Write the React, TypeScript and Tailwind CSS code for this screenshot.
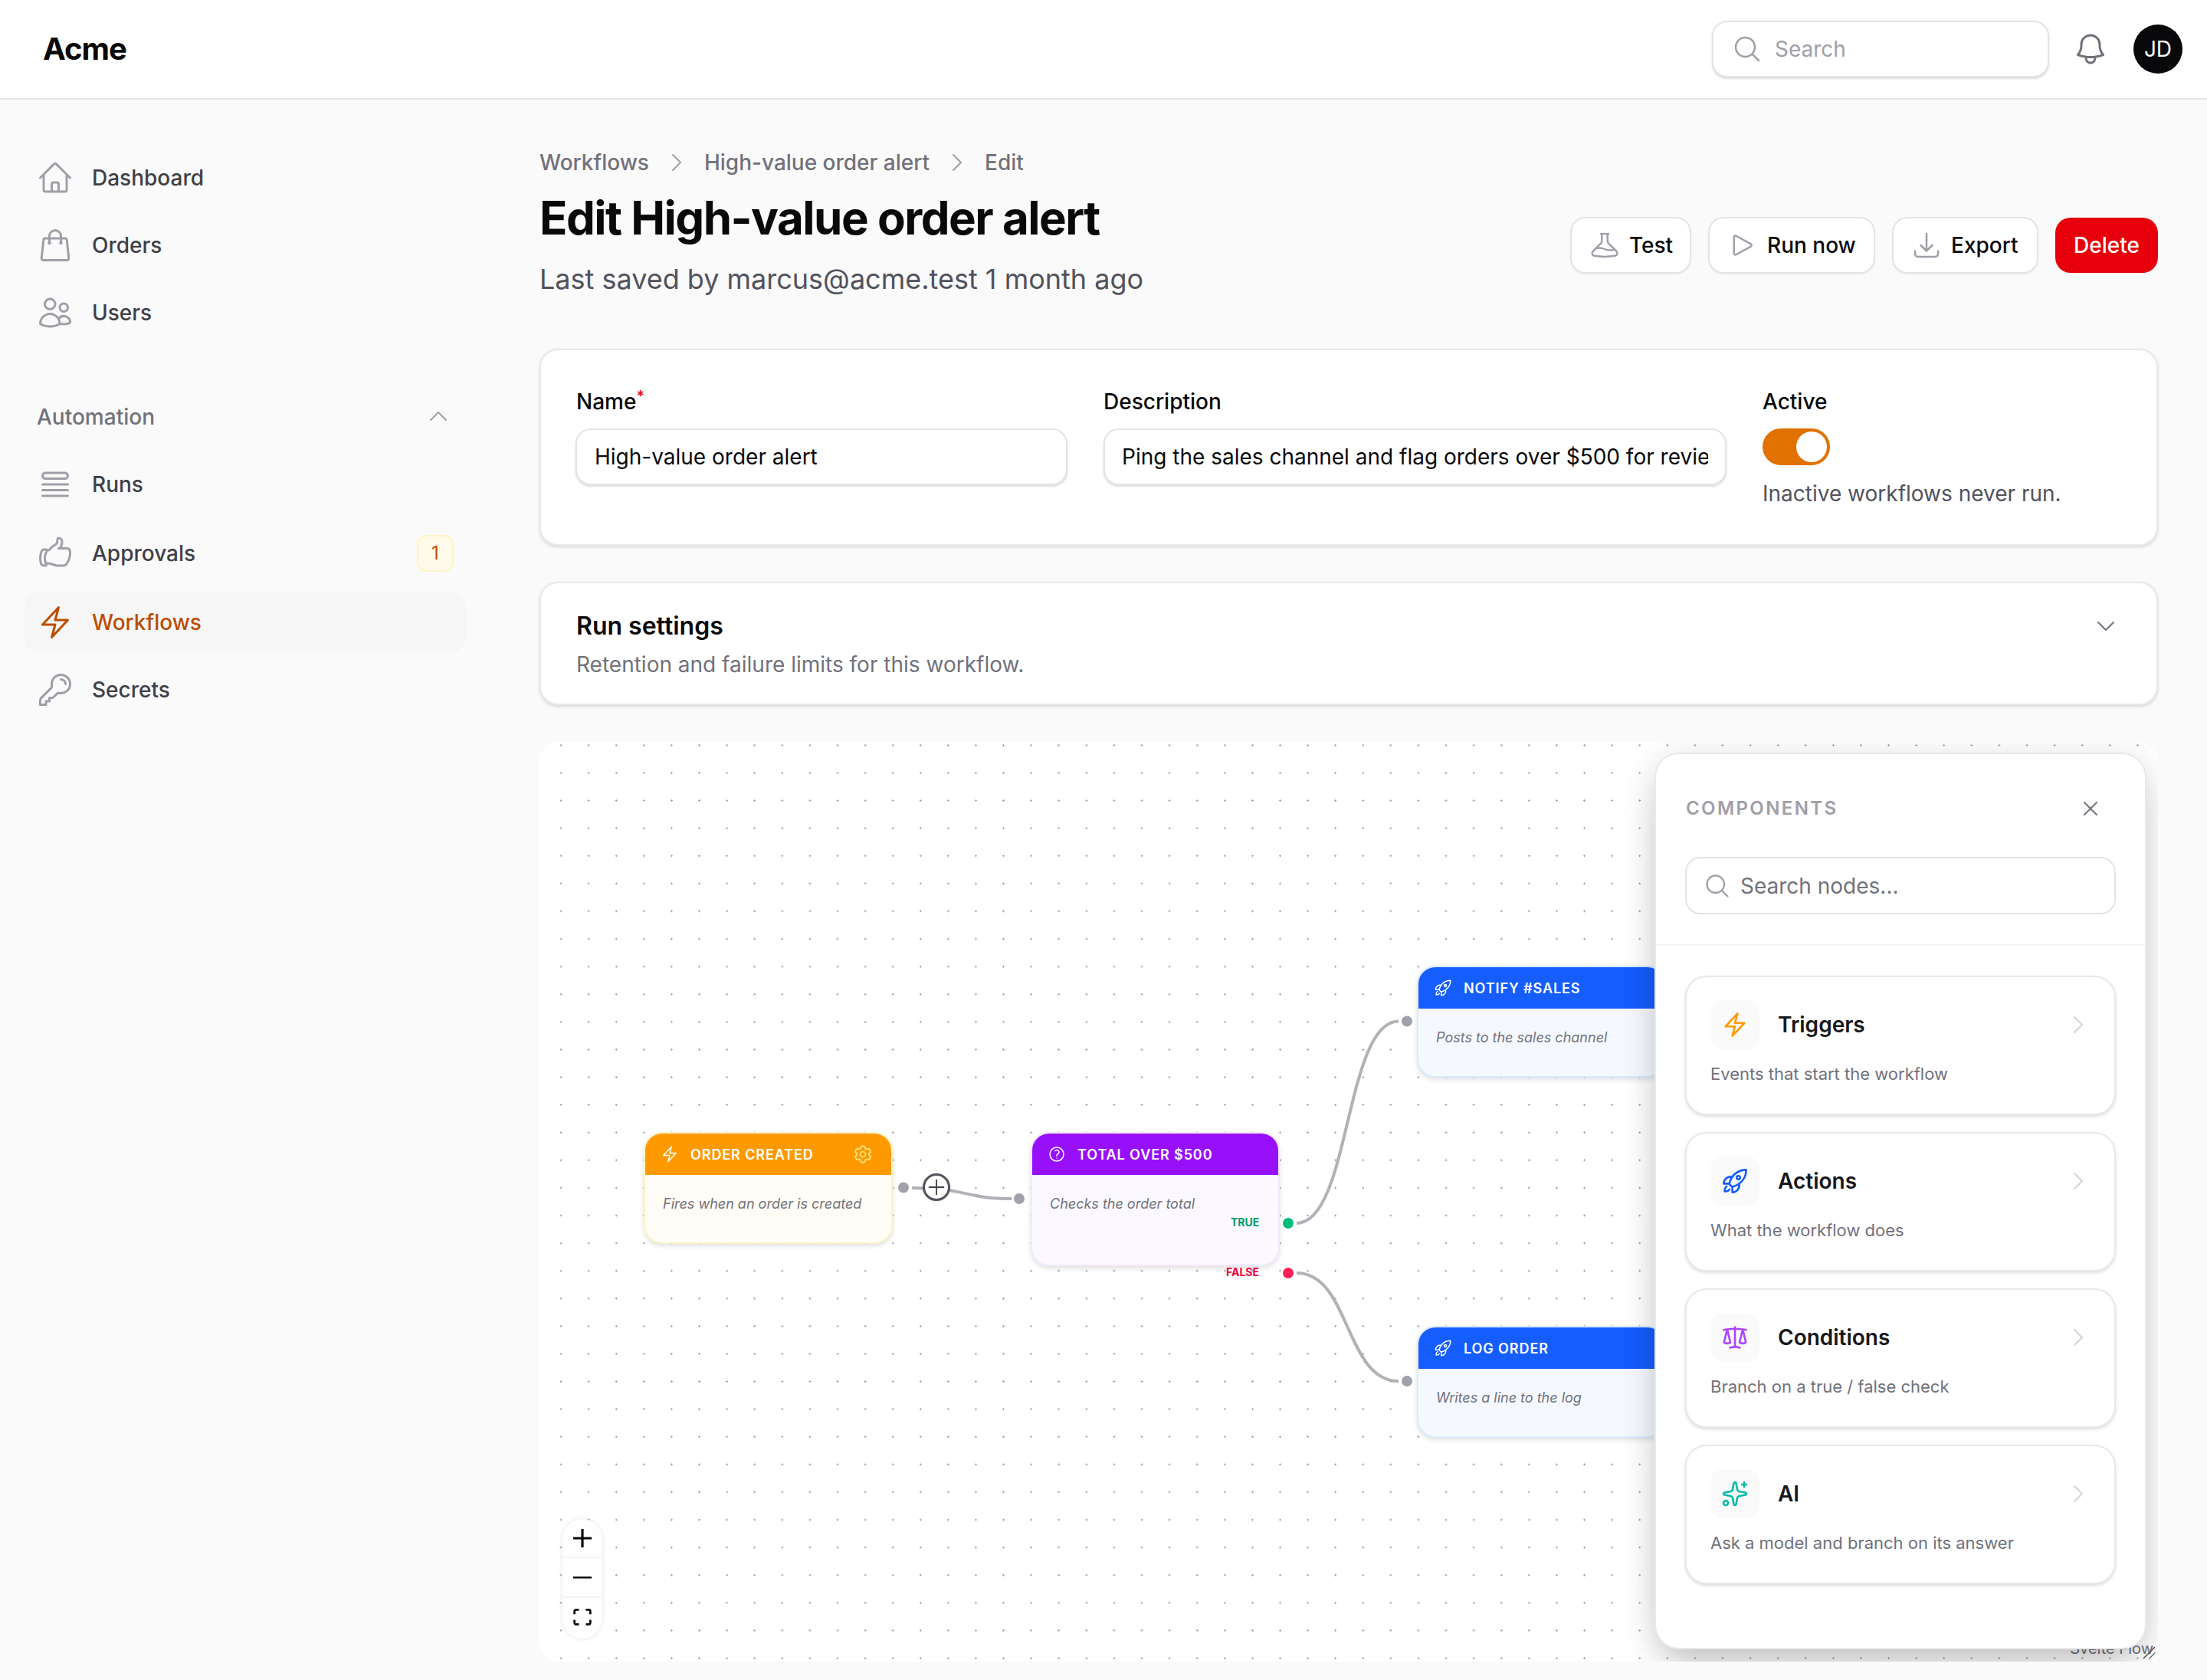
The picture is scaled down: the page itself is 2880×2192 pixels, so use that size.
import React from "react";
import {
  HiOutlineHome, HiOutlineShoppingBag, HiOutlineUsers, HiOutlineQueueList, HiOutlineHandThumbUp,
  HiOutlineBolt, HiOutlineKey, HiOutlineChevronUp, HiOutlineChevronDown, HiOutlineChevronRight,
  HiOutlineMagnifyingGlass, HiOutlineBell, HiOutlineBeaker, HiOutlinePlay, HiOutlineArrowDownTray,
  HiOutlineCog6Tooth, HiOutlineQuestionMarkCircle, HiOutlineRocketLaunch, HiOutlineScale, HiOutlineXMark, HiOutlinePlus,
} from "react-icons/hi2";
import { Sparkles } from "lucide-react";

type IconT = React.ComponentType<{ className?: string }>;

function NavRow({ icon: Icon, label, active, badge, tall }: { icon: IconT; label: string; active?: boolean; badge?: string; tall?: boolean }) {
  return (
    <div className={`flex items-center gap-6 rounded-[20px] px-4 ${tall ? "h-[84px]" : "h-20"} ${active ? "bg-zinc-100/70" : ""}`}>
      <Icon className={`size-12 shrink-0 ${active ? "text-amber-700" : "text-zinc-400"}`} />
      <span className={`flex-1 text-[28px] leading-10 font-medium ${active ? "text-amber-700" : "text-zinc-700"}`}>{label}</span>
      {badge && (
        <span className="flex h-12 w-12 items-center justify-center rounded-xl border-2 border-amber-100 bg-amber-50 text-2xl text-amber-700">{badge}</span>
      )}
    </div>
  );
}

function OutlineButton({ icon: Icon, label, width }: { icon: IconT; label: string; width: string }) {
  return (
    <button className={`flex h-[74px] items-center gap-3 rounded-[20px] border-2 border-zinc-200 bg-white pl-[23px] text-[28px] font-medium text-zinc-950 shadow-[0_1px_2px_rgba(0,0,0,0.06)] ${width}`}>
      <Icon className="size-10 shrink-0 text-zinc-400" />
      {label}
    </button>
  );
}

function FlowNode({ className, icon: Icon, title, body, header, frame, extra }: { className: string; icon: IconT; title: string; body: string; header: string; frame: string; extra?: React.ReactNode }) {
  return (
    <div className={`absolute w-[325px] overflow-hidden rounded-3xl border-2 shadow-[0_3px_6px_rgba(0,0,0,0.12)] ${frame} ${className}`}>
      <div className={`flex h-[54px] items-center gap-[15px] pl-5 pr-[23px] text-white ${header}`}>
        <Icon className="size-6 shrink-0" />
        <span className="flex-1 pt-px text-lg leading-6 font-semibold tracking-wider whitespace-nowrap">{title}</span>
        {extra}
      </div>
      <div className="px-[23px] pt-[24px] text-lg leading-7 text-zinc-500 italic whitespace-nowrap">{body}</div>
    </div>
  );
}

function ComponentCard({ icon: Icon, iconClass, title, desc }: { icon: IconT; iconClass: string; title: string; desc: string }) {
  return (
    <div className="h-[182px] rounded-[28px] border-2 border-zinc-200/80 bg-white px-[31px] pt-[30px] shadow-[0_2px_4px_rgba(0,0,0,0.14)]">
      <div className="flex items-center gap-6">
        <div className="flex size-16 items-center justify-center rounded-2xl bg-zinc-50">
          <Icon className={`size-9 stroke-[1.75] ${iconClass}`} />
        </div>
        <span className="flex-1 text-[28px] leading-10 font-semibold text-zinc-900">{title}</span>
        <HiOutlineChevronRight className="size-8 text-zinc-300" />
      </div>
      <p className="mt-4 text-[22px] leading-8 text-zinc-500">{desc}</p>
    </div>
  );
}

export default function App() {
  return (
    <div className="min-h-screen bg-[#fafafa] font-[Inter,sans-serif]">
      <header className="flex h-[130px] items-center justify-between border-b-2 border-zinc-200 bg-white pr-8 pl-14">
        <span className="text-[40px] font-bold tracking-tight text-zinc-950">Acme</span>
        <div className="flex items-center gap-8">
          <label className="-mr-0.5 flex h-[74px] w-[440px] items-center gap-4 rounded-[20px] border-2 border-zinc-200 bg-white pl-6 shadow-[0_2px_3px_rgba(0,0,0,0.14)]">
            <HiOutlineMagnifyingGlass className="size-10 shrink-0 text-zinc-400" />
            <input readOnly placeholder="Search" className="w-full bg-transparent text-[28px] outline-none placeholder:text-zinc-400" />
          </label>
          <HiOutlineBell className="size-12 text-zinc-500" />
          <div className="flex size-16 items-center justify-center rounded-full bg-zinc-950 text-[28px] text-white">JD</div>
        </div>
      </header>

      <div className="flex">
        <aside className="w-[640px] shrink-0 px-8 pt-[62px]">
          <nav className="flex flex-col gap-2">
            <NavRow icon={HiOutlineHome} label="Dashboard" />
            <NavRow icon={HiOutlineShoppingBag} label="Orders" />
            <NavRow icon={HiOutlineUsers} label="Users" />
          </nav>
          <div className="mt-[76px] flex h-10 items-center justify-between pr-5 pl-4 text-[28px] font-medium text-zinc-500">
            Automation
            <HiOutlineChevronUp className="-mt-0.5 size-8 text-zinc-400" />
          </div>
          <nav className="mt-7 flex flex-col gap-2">
            <NavRow icon={HiOutlineQueueList} label="Runs" />
            <NavRow icon={HiOutlineHandThumbUp} label="Approvals" badge="1" tall />
            <NavRow icon={HiOutlineBolt} label="Workflows" active />
            <NavRow icon={HiOutlineKey} label="Secrets" />
          </nav>
        </aside>

        <main className="min-w-0 flex-1 pt-[62px] pr-16 pl-16">
          <div className="flex h-10 items-center gap-5 text-[28px] font-medium text-zinc-500">
            <span>Workflows</span>
            <HiOutlineChevronRight className="size-8 text-zinc-400" />
            <span>High-value order alert</span>
            <HiOutlineChevronRight className="size-8 text-zinc-400" />
            <span>Edit</span>
          </div>
          <div className="mt-4 flex items-center justify-between">
            <div>
              <h1 className="text-[60px] leading-[72px] font-bold tracking-tight text-zinc-950">Edit High-value order alert</h1>
              <p className="mt-4 text-4xl leading-14 text-zinc-600">Last saved by marcus@acme.test 1 month ago</p>
            </div>
            <div className="flex items-center gap-[22px]">
              <OutlineButton icon={HiOutlineBeaker} label="Test" width="w-[158px]" />
              <OutlineButton icon={HiOutlinePlay} label="Run now" width="w-[218px]" />
              <OutlineButton icon={HiOutlineArrowDownTray} label="Export" width="w-[191px]" />
              <button className="h-[72px] w-[134px] rounded-[20px] bg-red-600 text-[28px] font-medium text-white">Delete</button>
            </div>
          </div>

          <section className="mt-[63px] grid h-[257px] grid-cols-[642px_813px_1fr] gap-x-[47px] rounded-3xl border-2 border-zinc-200/80 bg-white pt-[47px] pr-[46px] pl-[45px] shadow-[0_2px_4px_rgba(0,0,0,0.14)]">
            <div>
              <div className="pl-px text-[28px] leading-10 font-medium text-zinc-950">
                Name<sup className="text-xl text-red-600">*</sup>
              </div>
              <input readOnly value="High-value order alert" className="mt-[15px] h-[74px] w-full rounded-[20px] border-2 border-zinc-200 bg-white px-[23px] text-[28px] text-zinc-950 shadow-[0_2px_3px_rgba(0,0,0,0.14)] outline-none" />
            </div>
            <div>
              <div className="text-[28px] leading-10 font-medium text-zinc-950">Description</div>
              <input readOnly value="Ping the sales channel and flag orders over $500 for review" className="mt-[15px] h-[74px] w-full rounded-[20px] border-2 border-zinc-200 bg-white px-[22px] text-[28px] text-zinc-950 shadow-[0_2px_3px_rgba(0,0,0,0.14)] outline-none" />
            </div>
            <div>
              <div className="text-[28px] leading-10 font-medium text-zinc-950">Active</div>
              <div className="mt-[15px] flex h-12 w-[88px] items-center justify-end rounded-full bg-amber-600 pr-1">
                <div className="size-10 rounded-full bg-white" />
              </div>
              <p className="mt-[17px] text-[28px] leading-10 text-zinc-600">Inactive workflows never run.</p>
            </div>
          </section>

          <section className="mt-[47px] flex h-[161px] items-start justify-between rounded-3xl border-2 border-zinc-200/80 bg-white pt-9 pr-[50px] pl-[46px] shadow-[0_2px_4px_rgba(0,0,0,0.14)]">
            <div>
              <h2 className="text-[32px] leading-10 font-semibold text-zinc-950">Run settings</h2>
              <p className="mt-2.5 text-[28px] leading-10 text-zinc-500">Retention and failure limits for this workflow.</p>
            </div>
            <HiOutlineChevronDown className="mt-1 size-8 text-zinc-500" />
          </section>

          <section className="relative mt-12 h-[1200px] overflow-hidden rounded-3xl bg-white bg-[radial-gradient(circle,#a1a1aa_1px,transparent_1.2px)] bg-[position:10px_-13.7px] bg-[size:36.1px_36.1px]">
            <svg className="absolute inset-0 size-full" viewBox="704 968 2112 1200" fill="none">
              <g stroke="#b1b1b7" strokeWidth="4">
                <path d="M1190 1550 C1262 1550 1258 1564 1320 1564" />
                <path d="M1692 1596 C1762 1596 1755 1332.5 1825 1332.5" />
                <path d="M1692 1661 C1762 1661 1755 1802 1825 1802" />
              </g>
              <g stroke="#fff" strokeWidth="3">
                <circle cx="1179" cy="1549.5" r="8.5" fill="#a1a1aa" />
                <circle cx="1330" cy="1564" r="8.5" fill="#a1a1aa" />
                <circle cx="1836" cy="1332.5" r="8.5" fill="#a1a1aa" />
                <circle cx="1836" cy="1802" r="8.5" fill="#a1a1aa" />
                <circle cx="1681" cy="1596" r="8.5" fill="#00bc7d" />
                <circle cx="1681" cy="1661" r="8.5" fill="#ff2056" />
              </g>
            </svg>

            <FlowNode
              className="top-[509px] left-[136px] h-[146px] bg-[#fffdf6]"
              frame="border-amber-100"
              header="bg-amber-500"
              icon={HiOutlineBolt}
              title="ORDER CREATED"
              body="Fires when an order is created"
              extra={<HiOutlineCog6Tooth className="size-7 text-amber-200" />}
            />
            <FlowNode
              className="top-[509px] left-[641px] h-[175px] bg-[#fbf9ff]"
              frame="border-purple-100"
              header="bg-purple-600"
              icon={HiOutlineQuestionMarkCircle}
              title="TOTAL OVER $500"
              body="Checks the order total"
            />
            <span className="absolute top-[617px] left-[902px] text-sm leading-5 font-bold text-emerald-600">TRUE</span>
            <span className="absolute top-[682px] left-[896px] text-sm leading-5 font-bold text-rose-600">FALSE</span>
            <FlowNode
              className="top-[292px] left-[1145px] h-[146px] bg-[#f5f9ff]"
              frame="border-blue-100"
              header="bg-blue-600"
              icon={HiOutlineRocketLaunch}
              title="NOTIFY #SALES"
              body="Posts to the sales channel"
            />
            <FlowNode
              className="top-[762px] left-[1145px] h-[146px] bg-[#f5f9ff]"
              frame="border-blue-100"
              header="bg-blue-600"
              icon={HiOutlineRocketLaunch}
              title="LOG ORDER"
              body="Writes a line to the log"
            />

            <div className="absolute top-[563px] left-[500px] flex size-9 items-center justify-center rounded-full border-[3px] border-zinc-600 bg-white text-zinc-700 shadow-sm">
              <HiOutlinePlus className="size-8" />
            </div>

            <div className="absolute top-[1014px] left-[30px] flex w-[52px] flex-col overflow-hidden rounded-[26px] bg-[#fefefe] text-zinc-950 shadow-[0_0_4px_2px_rgba(0,0,0,0.06)]">
              <div className="flex h-[51px] items-center justify-center border-b-2 border-zinc-100">
                <svg className="size-6" viewBox="0 0 32 32" fill="currentColor"><path d="M32 18.133H18.133V32h-4.266V18.133H0v-4.266h13.867V0h4.266v13.867H32z" /></svg>
              </div>
              <div className="flex h-[52px] items-center justify-center border-b-2 border-zinc-100">
                <svg className="h-[3px] w-6" viewBox="0 0 32 5" fill="currentColor" preserveAspectRatio="none"><path d="M0 0h32v4.2H0z" /></svg>
              </div>
              <div className="flex h-[53px] items-center justify-center pb-1">
                <svg className="h-[22px] w-6" viewBox="0 0 32 30" fill="currentColor"><path d="M3.692 4.63c0-.53.4-.938.939-.938h5.215V0H4.708C2.13 0 0 2.054 0 4.63v5.216h3.692V4.63zM27.354 0h-5.2v3.692h5.17c.53 0 .984.4.984.939v5.215H32V4.631A4.624 4.624 0 0027.354 0zm.954 24.83c0 .532-.4.94-.939.94h-5.215v3.768h5.215c2.577 0 4.631-2.13 4.631-4.707v-5.139h-3.692v5.139zm-23.677.94c-.531 0-.939-.4-.939-.94v-5.138H0v5.139c0 2.577 2.13 4.707 4.708 4.707h5.138V25.77H4.631z" /></svg>
              </div>
            </div>

            <span className="absolute right-[6px] bottom-[5px] text-xl leading-6 text-zinc-500">Svelte Flow</span>
            <svg className="absolute right-0.5 bottom-0.5 size-[18px]" viewBox="0 0 18 18" fill="none" stroke="#555" strokeWidth="1.5"><path d="M1 16 16 1M8 17 17 8" /></svg>

            <aside className="absolute top-3.5 left-[1455px] h-[1170px] w-[642px] rounded-[32px] border-2 border-zinc-200/80 bg-white shadow-[0_25px_50px_-12px_rgba(0,0,0,0.25),0_0_50px_rgba(0,0,0,0.08)]">
              <div className="mt-[55px] mr-[55px] ml-[38px] flex h-8 items-center justify-between">
                <span className="pl-px text-2xl leading-8 font-semibold tracking-widest text-zinc-400">COMPONENTS</span>
                <HiOutlineXMark className="size-8 text-zinc-500" />
              </div>
              <div className="mx-[38px] mt-[47px] flex h-[75px] items-center gap-3 rounded-[20px] border-2 border-zinc-200 pl-[22px]">
                <HiOutlineMagnifyingGlass className="size-9 shrink-0 text-zinc-400" />
                <input readOnly placeholder="Search nodes..." className="w-full bg-transparent text-[28px] outline-none placeholder:text-zinc-500" />
              </div>
              <div className="mt-[39px] flex flex-col gap-[22px] border-t-2 border-zinc-100 px-[38px] pt-[39px]">
                <ComponentCard icon={HiOutlineBolt} iconClass="text-amber-500" title="Triggers" desc="Events that start the workflow" />
                <ComponentCard icon={HiOutlineRocketLaunch} iconClass="text-blue-600" title="Actions" desc="What the workflow does" />
                <ComponentCard icon={HiOutlineScale} iconClass="text-purple-500" title="Conditions" desc="Branch on a true / false check" />
                <ComponentCard icon={Sparkles} iconClass="text-teal-500" title="AI" desc="Ask a model and branch on its answer" />
              </div>
            </aside>
          </section>
        </main>
      </div>
    </div>
  );
}
